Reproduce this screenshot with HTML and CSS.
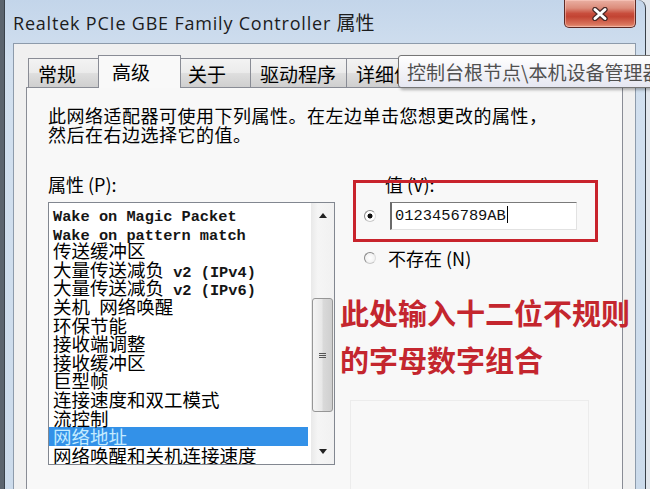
FILE: index.html
```html
<!DOCTYPE html>
<html lang="zh-CN">
<head>
    <meta charset="UTF-8">
    <meta name="viewport" content="width=device-width, initial-scale=1.0">
    <title>Realtek PCIe GBE Family Controller 属性</title>
    <link rel="stylesheet" href="styles.css">
</head>
<body>
    <div class="window">
        <div class="titlebar">
            <span class="title">Realtek PCIe GBE Family Controller <span class="cjk">属性</span></span>
            <button class="close" type="button">
                <svg width="18" height="14" viewBox="0 0 18 14">
                    <path d="M4 2.5 L14 11.5 M14 2.5 L4 11.5" stroke="#4a2a28" stroke-width="5.4" stroke-linecap="round"/>
                    <path d="M4 2.5 L14 11.5 M14 2.5 L4 11.5" stroke="#ffffff" stroke-width="3" stroke-linecap="round"/>
                </svg>
            </button>
        </div>

        <div class="client">
            <div class="tabs">
                <div class="tab">常规</div>
                <div class="tab active">高级</div>
                <div class="tab">关于</div>
                <div class="tab">驱动程序</div>
                <div class="tab">详细信息</div>
            </div>

            <div class="tooltip">控制台根节点\本机设备管理器</div>

            <div class="page">
                <p class="intro">此网络适配器可使用下列属性。在左边单击您想更改的属性，<br>然后在右边选择它的值。</p>

                <div class="columns">
                    <div class="prop-col">
                        <div class="field-label">属性 (P):</div>
                        <div class="listbox">
                            <ul class="items">
                                <li><span class="ascii">Wake on Magic Packet</span></li>
                                <li><span class="ascii">Wake on pattern match</span></li>
                                <li>传送缓冲区</li>
                                <li>大量传送减负<span class="ascii"> v2 (IPv4)</span></li>
                                <li>大量传送减负<span class="ascii"> v2 (IPv6)</span></li>
                                <li>关机<span class="ascii"> </span>网络唤醒</li>
                                <li>环保节能</li>
                                <li>接收端调整</li>
                                <li>接收缓冲区</li>
                                <li>巨型帧</li>
                                <li>连接速度和双工模式</li>
                                <li>流控制</li>
                                <li class="selected">网络地址</li>
                                <li>网络唤醒和关机连接速度</li>
                            </ul>
                            <div class="scrollbar">
                                <div class="sb-btn">
                                    <svg width="8" height="5" viewBox="0 0 8 5"><polygon points="0,5 8,5 4,0" fill="#222"/></svg>
                                </div>
                                <div class="sb-track">
                                    <div class="sb-thumb"><span class="grip"></span></div>
                                </div>
                                <div class="sb-btn">
                                    <svg width="8" height="5" viewBox="0 0 8 5"><polygon points="0,0 8,0 4,5" fill="#222"/></svg>
                                </div>
                            </div>
                        </div>
                    </div>

                    <div class="value-col">
                        <div class="field-label value-label">值 (V):</div>
                        <div class="radio-row first">
                            <span class="radio checked"></span>
                            <div class="textbox">0123456789AB<span class="caret"></span></div>
                        </div>
                        <div class="radio-row second">
                            <span class="radio"></span>
                            <span class="radio-text">不存在 (N)</span>
                        </div>
                        <div class="note">此处输入十二位不规则<br>的字母数字组合</div>

                        <!-- highlight frame drawn over the value field -->
                        <div class="mark"></div>
                        <div class="ghost-box"></div>
                    </div>
                </div>
            </div>
        </div>
    </div>
</body>
</html>
```

FILE: styles.css
```css
body {
    margin: 0;
    width: 650px;
    height: 489px;
    overflow: hidden;
    background: linear-gradient(to right, #5b646e 0, #5b646e 4px, #e2e7ed 4px);
    font-family: "Noto Sans CJK SC", sans-serif;
    color: #000;
}

.window {
    margin-left: 4px;
    width: 642px;
    height: 489px;
    box-sizing: border-box;
    border-left: 1px solid #39414a;
    border-right: 1px solid #39414a;
    border-top-right-radius: 8px;
    background: linear-gradient(#c3d5ea, #d2e0ef 60px, #ccdbeb);
}

/* title bar */
.titlebar {
    height: 43px;
    display: flex;
    justify-content: space-between;
    align-items: flex-start;
    padding: 0 9px 0 8px;
}
.title {
    font-family: "Open Sans", sans-serif;
    font-size: 18px;
    letter-spacing: 0.8px;
    line-height: 43px;
    color: #1c1c1c;
    white-space: nowrap;
}
.title .cjk {
    font-family: "Noto Sans CJK SC", sans-serif;
    font-size: 19px;
    letter-spacing: 0;
}
.close {
    width: 72px;
    height: 28px;
    padding: 0;
    display: flex;
    align-items: center;
    justify-content: center;
    border: 1px solid #5d2a25;
    border-top: none;
    border-radius: 0 0 5px 5px;
    background: linear-gradient(#eab0a3, #dc8c7b 30%, #c84d3c 50%, #c24433 62%, #d9745c 90%, #e79a80);
    box-shadow: inset 0 0 0 1px rgba(255, 210, 200, 0.5);
}

/* dialog body */
.client {
    position: relative;
    margin: 0 9px 0 8px;
    height: 445px;
    border: 1px solid #8d9bab;
    border-bottom: none;
    background: #f0f0f0;
}

.tabs {
    position: relative;
    z-index: 1;
    display: flex;
    align-items: flex-end;
    height: 33px;
    margin: 11px 0 0 14px;
}
.tab {
    box-sizing: border-box;
    min-width: 72px;
    height: 29px;
    margin-bottom: 1px;
    padding: 1px 10px 0 9px;
    border: 1px solid #898c95;
    border-left: none;
    border-bottom: none;
    background: linear-gradient(#f3f3f3, #ebebeb 48%, #dedede 52%, #cfcfcf);
    font-size: 19px;
    line-height: 27px;
    white-space: nowrap;
}
.tab:first-child {
    border-left: 1px solid #898c95;
}
.tab.active {
    min-width: 83px;
    height: 33px;
    margin: 0 -2px;
    padding-left: 13px;
    padding-top: 0;
    border-left: 1px solid #898c95;
    background: #f9f9f9;
    line-height: 31px;
    position: relative;
    z-index: 1;
}

.tooltip {
    position: absolute;
    left: 384px;
    top: 11px;
    z-index: 3;
    width: 270px;
    height: 33px;
    box-sizing: border-box;
    padding-left: 8px;
    border: 1px solid #767676;
    border-radius: 3px;
    background: linear-gradient(#ffffff, #e6e7f1);
    box-shadow: 2px 2px 3px rgba(0, 0, 0, 0.3);
    font-size: 19px;
    line-height: 31px;
    color: #505050;
    white-space: nowrap;
}

/* tab page */
.page {
    position: relative;
    height: 402px;
    margin: -1px 12px 0 12px;
    box-sizing: border-box;
    padding: 18px 0 0 21px;
    border: 1px solid #898c95;
    border-bottom: none;
    background: #f8f8f8;
}
.intro {
    margin: 0;
    font-size: 18px;
    line-height: 19px;
    letter-spacing: 0.5px;
    white-space: nowrap;
}

.columns {
    display: grid;
    grid-template-columns: 287px 1fr;
    column-gap: 5px;
    margin-top: 31px;
}
.field-label {
    font-size: 18px;
    line-height: 19px;
}

.listbox {
    display: flex;
    height: 263px;
    margin-top: 8px;
    box-sizing: border-box;
    border: 1px solid #828790;
    background: #fff;
}
.items {
    flex: 1;
    overflow: hidden;
    margin: 0;
    padding: 1px 0 0 0;
    list-style: none;
}
.items li {
    height: 18.6px;
    margin-right: 3px;
    padding-left: 4px;
    font-size: 18.5px;
    line-height: 18.6px;
    white-space: nowrap;
}
.items li.selected {
    background: #3391e8;
    color: #c4ebff;
}
.ascii {
    font-family: "Liberation Mono", monospace;
    font-size: 15.3px;
    font-weight: 700;
    color: #151515;
}
.selected .ascii {
    color: inherit;
}

.scrollbar {
    width: 23px;
    display: flex;
    flex-direction: column;
    background: linear-gradient(to right, #e9e9e9, #f5f5f5 30%, #f1f1f1);
}
.sb-btn {
    height: 25px;
    display: flex;
    align-items: center;
    justify-content: center;
}
.sb-track {
    flex: 1;
}
.sb-thumb {
    height: 114px;
    margin: 70px 1px 0 1px;
    box-sizing: border-box;
    display: flex;
    align-items: center;
    justify-content: center;
    border: 1px solid #969696;
    border-radius: 3px;
    background: linear-gradient(to right, #f4f4f4, #e8e8e8 45%, #d9d9d9 55%, #cfcfcf);
}
.grip {
    width: 7px;
    height: 5px;
    background: repeating-linear-gradient(#555 0, #555 1px, transparent 1px, transparent 2px);
}

/* value side */
.value-col {
    position: relative;
}
.value-label {
    padding-left: 45px;
}
.radio-row {
    display: flex;
    align-items: center;
    padding-left: 24px;
}
.radio-row.first {
    height: 28px;
    margin-top: 8px;
}
.radio-row.second {
    height: 20px;
    margin-top: 18px;
}
.radio {
    width: 12px;
    height: 12px;
    box-sizing: border-box;
    border: 1px solid #8a8a8a;
    border-right-color: #dcdcdc;
    border-bottom-color: #c8c8c8;
    border-radius: 50%;
    background: radial-gradient(circle, #fff, #ececec);
}
.radio.checked {
    background: radial-gradient(circle, #111 0, #111 2.2px, #fff 2.8px);
}
.textbox {
    width: 187px;
    height: 28px;
    margin-left: 14px;
    box-sizing: border-box;
    padding-left: 3px;
    border: 1px solid #e2e2e2;
    border-top-color: #7a7a7a;
    border-left: 2px solid #6a6a6a;
    background: #fff;
    font-family: "Liberation Mono", monospace;
    font-size: 15.4px;
    line-height: 26px;
    color: #111;
}
.caret {
    display: inline-block;
    width: 1px;
    height: 17px;
    margin-left: 1px;
    vertical-align: -3px;
    background: #000;
}
.radio-text {
    margin-left: 12px;
    font-size: 18px;
    line-height: 20px;
}

.note {
    position: relative;
    margin-top: 21px;
    font-size: 29px;
    font-weight: 700;
    line-height: 47px;
    color: #c4262e;
    white-space: nowrap;
}

.mark {
    position: absolute;
    left: 13px;
    top: 5px;
    width: 245px;
    height: 62px;
    box-sizing: border-box;
    border: 3px solid #c8232c;
}
.ghost-box {
    position: absolute;
    left: 10px;
    top: 225px;
    width: 237px;
    height: 88px;
    border: 1px solid #ececec;
    border-bottom: none;
}
```
